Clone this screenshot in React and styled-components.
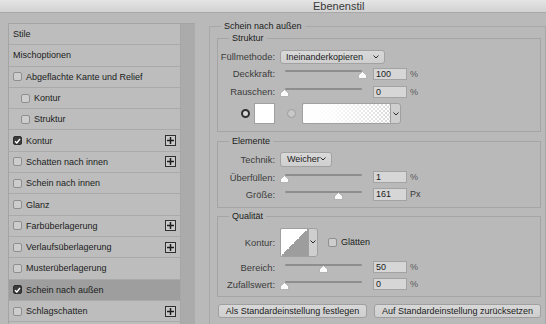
import React from "react";
import styled, { createGlobalStyle, css } from "styled-components";

const Global = createGlobalStyle`
  html, body { margin: 0; padding: 0; }
  body {
    background: #b9b9b9;
    font-family: "Liberation Sans", Arial, sans-serif;
    font-size: 9px;
    color: #1f1f1f;
  }
`;

const Window = styled.div`
  width: 546px;
  height: 324px;
  overflow: hidden;
  background: #b9b9b9;
  display: flex;
  flex-direction: column;
`;

const TitleBar = styled.div`
  flex: none;
  height: 13px;
  box-sizing: border-box;
  background: linear-gradient(#e4e4e4, #d2d2d2);
  border-bottom: 1px solid #a8a8a8;
  font-size: 11px;
  line-height: 12px;
  color: #3a3a3a;
  padding-left: 313px;
`;

const Body = styled.div`
  display: flex;
  align-items: flex-start;
`;

/* ---------- left list ---------- */
const LeftPanel = styled.div`
  margin: 10px 0 0 8px;
  width: 187px;
  height: 320px;
  display: flex;
  border-top: 1px solid #a4a4a4;
  border-left: 1px solid #a4a4a4;
  box-sizing: border-box;
`;

const List = styled.div`
  width: 172px;
  display: flex;
  flex-direction: column;
  background: #bdbdbd;
`;

const ScrollTrack = styled.div`
  width: 14px;
  background: #ababab;
  border-left: 1px solid #a6a6a6;
`;

const Row = styled.div`
  height: 21.3px;
  box-sizing: border-box;
  flex: none;
  display: flex;
  align-items: center;
  gap: 4px;
  padding-left: ${(p) => (p.$sub ? 12 : 4)}px;
  padding-right: 4px;
  border-bottom: 1px solid #aaaaaa;
  background: ${(p) => (p.$selected ? "#9e9e9e" : "#bdbdbd")};
  color: #1c1c1c;
`;

const Box = styled.span`
  flex: none;
  width: 9px;
  height: 9px;
  box-sizing: border-box;
  border-radius: 2px;
  display: inline-flex;
  align-items: center;
  justify-content: center;
  ${(p) =>
    p.$checked
      ? css`
          background: #3c3c3c;
          border: 1px solid #2e2e2e;
        `
      : css`
          background: #cdcdcd;
          border: 1px solid #8f8f8f;
        `}
`;

const PlusBox = styled.span`
  margin-left: auto;
  width: 11px;
  height: 11px;
  box-sizing: border-box;
  border: 1px solid #2f2f2f;
  background: #c9c9c9;
  display: inline-flex;
  align-items: center;
  justify-content: center;
`;

const Check = ({ checked }) => (
  <Box $checked={checked}>
    {checked && (
      <svg width="7" height="6" viewBox="0 0 7 6">
        <path d="M1 3.2 L2.8 5 L6 1" fill="none" stroke="#fff" strokeWidth="1.4" />
      </svg>
    )}
  </Box>
);

const Plus = () => (
  <PlusBox>
    <svg width="7" height="7" viewBox="0 0 7 7">
      <path d="M3.5 0 V7 M0 3.5 H7" stroke="#1c1c1c" strokeWidth="1.5" />
    </svg>
  </PlusBox>
);

const items = [
  { label: "Stile" },
  { label: "Mischoptionen" },
  { label: "Abgeflachte Kante und Relief", box: true },
  { label: "Kontur", box: true, sub: true },
  { label: "Struktur", box: true, sub: true },
  { label: "Kontur", box: true, checked: true, plus: true },
  { label: "Schatten nach innen", box: true, plus: true },
  { label: "Schein nach innen", box: true },
  { label: "Glanz", box: true },
  { label: "Farbüberlagerung", box: true, plus: true },
  { label: "Verlaufsüberlagerung", box: true, plus: true },
  { label: "Musterüberlagerung", box: true },
  { label: "Schein nach außen", box: true, checked: true, selected: true },
  { label: "Schlagschatten", box: true, plus: true },
];

/* ---------- right side ---------- */
const Group = styled.fieldset`
  margin: 0;
  min-width: 0;
  border: 1px solid #a5a5a5;
  box-sizing: border-box;
  padding: 0;
`;

const OuterGroup = styled(Group)`
  margin: 8px 0 0 14px;
  width: 340px;
  height: 320px;
  padding: 1px 4px 0 7px;
  border-color: #a9a9a9;
`;

const Legend = styled.legend`
  padding: 0 3px;
  margin-left: ${(p) => p.$offset}px;
  font-size: 9px;
  line-height: 11px;
  color: #1c1c1c;
`;

const SubGroup = styled(Group)`
  margin-top: ${(p) => p.$mt || 0}px;
  padding: ${(p) => p.$pt}px 0 ${(p) => p.$pb}px 0;
`;

const FieldRow = styled.div`
  display: flex;
  align-items: center;
  height: ${(p) => p.$h || 17}px;
  margin-top: ${(p) => p.$mt || 0}px;
`;

const Label = styled.span`
  width: 57px;
  margin-right: 5px;
  text-align: right;
  color: #3c3c3c;
  font-size: 9.4px;
  flex: none;
`;

const SelectBox = styled.div`
  width: ${(p) => p.$w}px;
  height: ${(p) => p.$h}px;
  box-sizing: border-box;
  display: flex;
  align-items: center;
  padding: 0 5px 0 ${(p) => p.$pl || 5}px;
  background: linear-gradient(#d9d9d9, #cfcfcf);
  border: 1px solid #a2a2a2;
  border-radius: 3px;
  color: #1c1c1c;
  font-size: 9px;
`;

const Chevron = () => (
  <svg width="6" height="4" viewBox="0 0 6 4">
    <path d="M0.5 0.5 L3 3 L5.5 0.5" fill="none" stroke="#2a2a2a" strokeWidth="1" />
  </svg>
);

const ChevronRight = styled.span`
  margin-left: auto;
  display: inline-flex;
`;

const SliderBox = styled.div`
  position: relative;
  width: 88px;
  height: 17px;
  flex: none;
`;

const Track = styled.div`
  position: absolute;
  left: 5px;
  top: 5px;
  width: 77px;
  height: 2px;
  background: #8e8e8e;
  border-radius: 1px;
`;

const Thumb = styled.svg`
  position: absolute;
  top: 6px;
`;

const Slider = ({ pos }) => (
  <SliderBox>
    <Track />
    <Thumb width="9" height="8" viewBox="0 0 9 8" style={{ left: 4 + pos * 78 - 4.5 }}>
      <path d="M4.5 0.6 L8.5 4.2 V7.5 H0.5 V4.2 Z" fill="#fbfbfb" stroke="#9a9a9a" strokeWidth="0.6" />
    </Thumb>
  </SliderBox>
);

const NumInput = styled.div`
  margin-left: 5px;
  width: 34px;
  height: ${(p) => p.$h || 12}px;
  box-sizing: border-box;
  background: #d6d6d6;
  border: 1px solid #a3a3a3;
  padding-left: 2px;
  display: flex;
  align-items: center;
  color: #1c1c1c;
  flex: none;
`;

const Unit = styled.span`
  margin-left: 3px;
  color: ${(p) => (p.$dim ? "#5a5a5a" : "#3a3a3a")};
`;

const SliderRow = ({ label, pos, value, unit, h, mt }) => (
  <FieldRow $mt={mt}>
    <Label>{label}</Label>
    <Slider pos={pos} />
    <NumInput $h={h}>{value}</NumInput>
    <Unit $dim={unit === "%"}>{unit}</Unit>
  </FieldRow>
);

const ColorRow = styled.div`
  display: flex;
  align-items: center;
  height: 20px;
  margin-top: 3px;
  padding-left: 23px;
`;

const Radio = styled.span`
  width: 9px;
  height: 9px;
  box-sizing: border-box;
  border-radius: 50%;
  flex: none;
  margin-right: ${(p) => p.$mr}px;
  ${(p) =>
    p.$on
      ? css`
          border: 2.5px solid #303030;
          background: #d8d8d8;
        `
      : css`
          border: 1px solid #9c9c9c;
          background: #c8c8c8;
        `}
`;

const Swatch = styled.div`
  width: 21px;
  height: 21px;
  box-sizing: border-box;
  background: #fff;
  border: 1px solid #a0a0a0;
  margin-right: 12px;
  flex: none;
`;

const GradientBox = styled.div`
  width: 88px;
  height: 21px;
  box-sizing: border-box;
  border: 1px solid #a0a0a0;
  border-right: none;
  background:
    linear-gradient(to right, #ffffff 0%, rgba(255,255,255,0.85) 35%, rgba(255,255,255,0) 100%),
    repeating-conic-gradient(#dcdcdc 0% 25%, #ffffff 0% 50%) 0 0 / 4px 4px;
  border-radius: 2px 0 0 2px;
`;

const ArrowPart = styled.div`
  width: ${(p) => p.$w}px;
  height: ${(p) => p.$h}px;
  box-sizing: border-box;
  border: 1px solid #a0a0a0;
  background: #cfcfcf;
  border-radius: 0 3px 3px 0;
  display: flex;
  align-items: center;
  justify-content: center;
  flex: none;
`;

const ContourPreview = styled.div`
  width: 28px;
  height: 29px;
  box-sizing: border-box;
  border: 1px solid #a0a0a0;
  border-right: none;
  background: linear-gradient(to top left, #9d9d9d 50%, #ffffff 50%);
  border-radius: 2px 0 0 2px;
  flex: none;
`;

const CheckLabel = styled.label`
  margin-left: 10px;
  display: flex;
  align-items: center;
  gap: 4px;
  color: #1c1c1c;
`;

const ButtonRow = styled.div`
  display: flex;
  gap: 7px;
  margin-top: 7px;
  padding-left: 1px;
`;

const Button = styled.button`
  width: ${(p) => p.$w}px;
  height: 14px;
  box-sizing: border-box;
  padding: 0;
  font-family: "Liberation Sans", Arial, sans-serif;
  font-size: 9px;
  color: #1c1c1c;
  background: linear-gradient(#d8d8d8, #cfcfcf);
  border: 1px solid #a0a0a0;
  border-radius: 3px;
`;

export default function App() {
  return (
    <>
      <Global />
      <Window>
        <TitleBar>Ebenenstil</TitleBar>
        <Body>
          <LeftPanel>
            <List>
              {items.map((it, i) => (
                <Row key={i} $sub={it.sub} $selected={it.selected}>
                  {it.box && <Check checked={it.checked} />}
                  <span>{it.label}</span>
                  {it.plus && <Plus />}
                </Row>
              ))}
            </List>
            <ScrollTrack />
          </LeftPanel>

          <OuterGroup>
            <Legend $offset={4}>Schein nach außen</Legend>

            <SubGroup $pt={5.5} $pb={7}>
              <Legend $offset={11}>Struktur</Legend>
              <FieldRow $h={14}>
                <Label>Füllmethode:</Label>
                <SelectBox $w={105} $h={14}>
                  Ineinanderkopieren
                  <ChevronRight><Chevron /></ChevronRight>
                </SelectBox>
              </FieldRow>
              <FieldRow $h={18} $mt={1}>
                <Label>Deckkraft:</Label>
                <Slider pos={1} />
                <NumInput>100</NumInput>
                <Unit $dim>%</Unit>
              </FieldRow>
              <FieldRow $h={18}>
                <Label>Rauschen:</Label>
                <Slider pos={0} />
                <NumInput>0</NumInput>
                <Unit $dim>%</Unit>
              </FieldRow>
              <ColorRow>
                <Radio $on $mr={4} />
                <Swatch />
                <Radio $mr={6} />
                <GradientBox />
                <ArrowPart $w={11} $h={21}><Chevron /></ArrowPart>
              </ColorRow>
            </SubGroup>

            <SubGroup $mt={4.5} $pt={4.5} $pb={4}>
              <Legend $offset={11}>Elemente</Legend>
              <FieldRow $h={15}>
                <Label>Technik:</Label>
                <SelectBox $w={52} $h={15} $pl={6}>
                  Weicher
                  <ChevronRight><Chevron /></ChevronRight>
                </SelectBox>
              </FieldRow>
              <SliderRow label="Überfüllen:" pos={0.01} value="1" unit="%" mt={2} />
              <SliderRow label="Größe:" pos={0.695} value="161" unit="Px" h={13} />
            </SubGroup>

            <SubGroup $mt={3.5} $pt={5.5} $pb={3}>
              <Legend $offset={11}>Qualität</Legend>
              <FieldRow $h={29}>
                <Label>Kontur:</Label>
                <ContourPreview />
                <ArrowPart $w={10} $h={29}><Chevron /></ArrowPart>
                <CheckLabel>
                  <Check />
                  Glätten
                </CheckLabel>
              </FieldRow>
              <SliderRow label="Bereich:" pos={0.5} value="50" unit="%" mt={2} />
              <SliderRow label="Zufallswert:" pos={0} value="0" unit="%" />
            </SubGroup>

            <ButtonRow>
              <Button $w={150}>Als Standardeinstellung festlegen</Button>
              <Button $w={168}>Auf Standardeinstellung zurücksetzen</Button>
            </ButtonRow>
          </OuterGroup>
        </Body>
      </Window>
    </>
  );
}
